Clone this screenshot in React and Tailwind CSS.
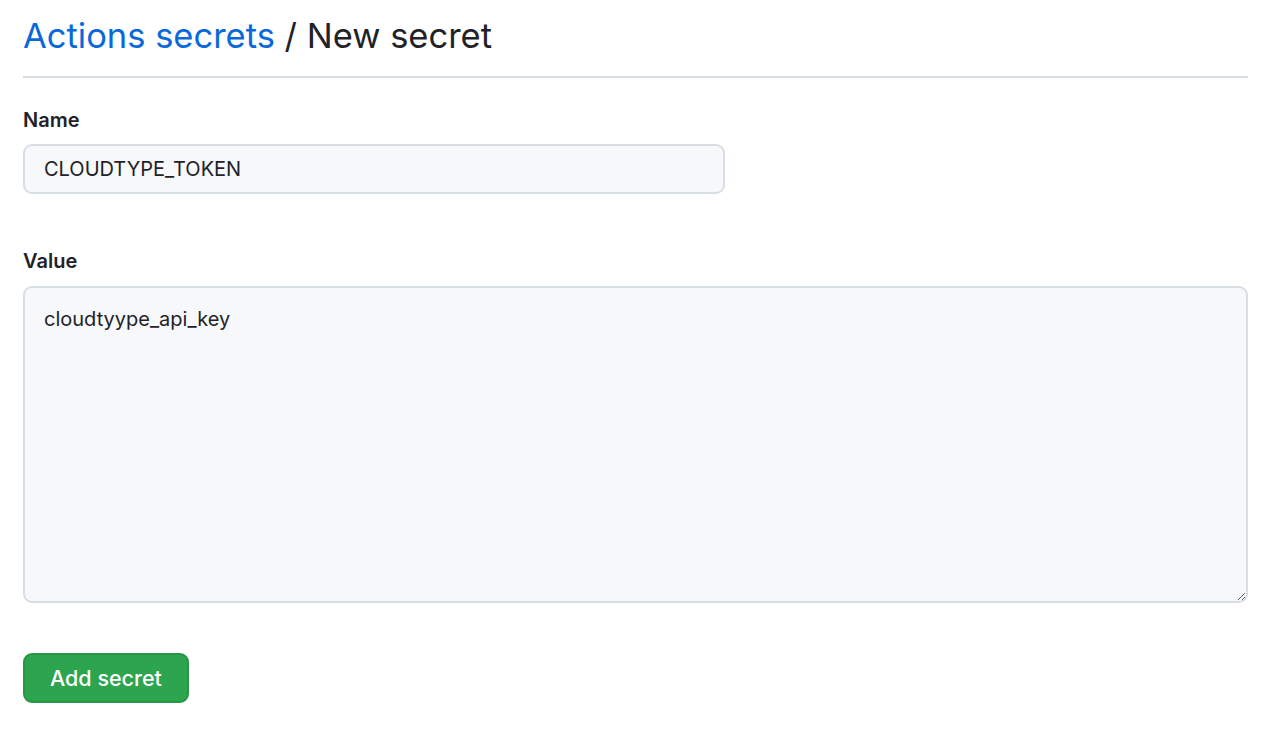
export default function App() {
  return (
    <div className="min-h-[740px] bg-white font-['Inter','Liberation_Sans',sans-serif] text-[#1f2328]">
      <div className="pl-[23px] pr-[32px] pt-[14px]">
        <h1 className="text-[34.5px] leading-[44px] font-normal pb-[18px] border-b-2 border-[#d8dee4]">
          <a className="text-[#0969da]">Actions secrets</a>
          <span> / New secret</span>
        </h1>

        <form className="pt-[28px]">
          <label className="block text-[20px] leading-[28px] font-semibold">Name</label>
          <input
            readOnly
            value="CLOUDTYPE_TOKEN"
            className="mt-[10px] block w-[702px] h-[50px] px-[19px] text-[20px] bg-[#f6f8fa] border-2 border-[#d8dee4] rounded-[9px] outline-none"
          />

          <label className="block mt-[53px] text-[20px] leading-[28px] font-semibold">Value</label>
          <textarea
            readOnly
            value="cloudtyype_api_key"
            className="mt-[11px] block w-full h-[317px] px-[19px] py-[16px] text-[20px] leading-[30px] bg-[#f6f8fa] border-2 border-[#d8dee4] rounded-[9px] outline-none resize-y"
          />

          <button
            type="button"
            className="mt-[50px] h-[50px] px-[25px] text-[21.5px] font-medium text-white bg-[#2da44e] border-2 border-[#2a9547] rounded-[9px]"
          >
            Add secret
          </button>
        </form>
      </div>
    </div>
  );
}
